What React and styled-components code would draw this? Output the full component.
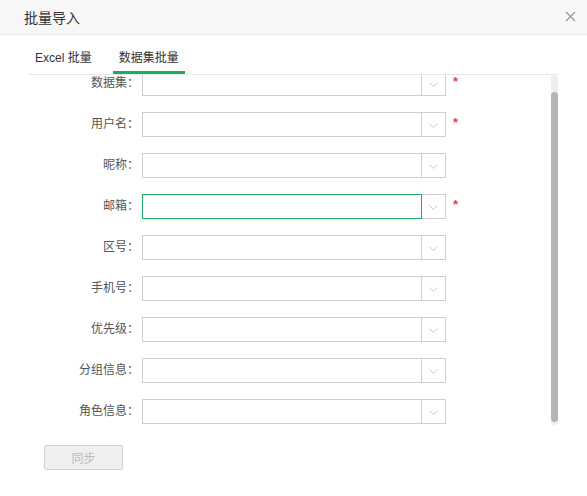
import React, { useLayoutEffect, useRef, useState } from "react";
import styled, { createGlobalStyle } from "styled-components";

const GlobalStyle = createGlobalStyle`
  body {
    margin: 0;
    background: #fff;
    font-family: "Liberation Sans", "Noto Sans CJK SC", sans-serif;
  }
`;

const fields = [
  { label: "数据集", required: true },
  { label: "用户名", required: true },
  { label: "昵称" },
  { label: "邮箱", required: true, active: true },
  { label: "区号" },
  { label: "手机号" },
  { label: "优先级" },
  { label: "分组信息" },
  { label: "角色信息" },
];

export default function App() {
  const scrollRef = useRef(null);
  const [thumb, setThumb] = useState({ top: 17, height: 330 });

  // scroll the form to the end and size the thumb from it
  useLayoutEffect(() => {
    const el = scrollRef.current;
    if (!el) return;
    el.scrollTop = el.scrollHeight;
    const ratio = el.clientHeight / el.scrollHeight;
    setThumb({ top: el.scrollTop * ratio, height: el.clientHeight * ratio - 3 });
  }, []);

  return (
    <Dialog>
      <GlobalStyle />
      <Header>
        <Title>批量导入</Title>
        <Close aria-label="close">
          <svg width="11" height="11" viewBox="0 0 11 11">
            <path d="M1 1L10 10M10 1L1 10" stroke="#999" strokeWidth="1.2" fill="none" />
          </svg>
        </Close>
      </Header>
      <Body>
        <Tabs>
          <Tab>Excel 批量</Tab>
          <Tab $active>数据集批量</Tab>
        </Tabs>
        <ScrollArea>
          <Viewport ref={scrollRef}>
            <Form>
              {fields.map(({ label, required, active }) => (
                <Row key={label}>
                  <Label>{label}：</Label>
                  <Select>
                    <Input $active={active} />
                    <Arrow>
                      <svg width="9" height="5" viewBox="0 0 9 5">
                        <path d="M0.5 0.5L4.5 4.5L8.5 0.5" stroke="#c8c8c8" strokeWidth="1" fill="none" />
                      </svg>
                    </Arrow>
                  </Select>
                  {required && <Star>*</Star>}
                </Row>
              ))}
            </Form>
          </Viewport>
          <Track>
            <Thumb style={{ marginTop: thumb.top, height: thumb.height }} />
          </Track>
        </ScrollArea>
        <Footer>
          <Button disabled>同步</Button>
        </Footer>
      </Body>
    </Dialog>
  );
}

const Dialog = styled.div`
  width: 587px;
  height: 496px;
  background: #fff;
`;

const Header = styled.div`
  height: 34px;
  display: flex;
  align-items: center;
  justify-content: space-between;
  padding: 0 11px 0 24px;
  background: #f7f7f7;
  border-bottom: 1px solid #e8e8e8;
`;

const Title = styled.div`
  font-size: 14px;
  color: #333;
`;

const Close = styled.div`
  display: flex;
  align-items: center;
  justify-content: center;
  width: 11px;
  height: 11px;
  margin-top: -2px;
`;

const Body = styled.div`
  padding: 0 29px 0 28px;
`;

const Tabs = styled.div`
  display: flex;
  gap: 15px;
  height: 39px;
  border-bottom: 1px solid #e6e6e6;
  padding-left: 1px;
`;

const Tab = styled.div`
  display: flex;
  align-items: center;
  padding: 6px 6px 0;
  font-size: 12px;
  color: #333;
  border-bottom: 3px solid ${(p) => (p.$active ? "#1aae5e" : "transparent")};
`;

const ScrollArea = styled.div`
  display: flex;
  height: 350px;
`;

const Viewport = styled.div`
  flex: 1;
  overflow: hidden;
`;

const Track = styled.div`
  width: 7px;
  background: #eeeeee;
  border-radius: 4px;
`;

const Thumb = styled.div`
  background: #b5b5b5;
  border-radius: 4px;
`;

const Form = styled.div`
  display: flex;
  flex-direction: column;
  gap: 16px;
  padding: 14px 0 1px;
`;

const Row = styled.div`
  display: flex;
  align-items: flex-start;
  height: 25px;
`;

const Label = styled.div`
  width: 111px;
  margin-right: 3px;
  line-height: 25px;
  text-align: right;
  font-size: 12px;
  color: #555;
  white-space: nowrap;
`;

const Select = styled.div`
  display: flex;
  height: 25px;
`;

const Input = styled.div`
  width: 278px;
  height: 23px;
  border: 1px solid ${(p) => (p.$active ? "#1fae66" : "#cfcfcf")};
  background: #fff;
`;

const Arrow = styled.div`
  display: flex;
  align-items: center;
  justify-content: center;
  box-sizing: border-box;
  width: 24px;
  height: 25px;
  padding-top: 2px;
  border: 1px solid #cfcfcf;
  border-left: none;
`;

const Star = styled.span`
  margin: 4px 0 0 7px;
  font-size: 13px;
  line-height: 14px;
  color: #e8454d;
  font-weight: bold;
`;

const Footer = styled.div`
  padding: 20px 0 0 16px;
`;

const Button = styled.button`
  width: 79px;
  height: 25px;
  background: #efefef;
  border: 1px solid #d2d2d2;
  border-radius: 2px;
  font-family: "Liberation Sans", "Noto Sans CJK SC", sans-serif;
  font-size: 12px;
  color: #bbb;
  padding: 0;
`;
